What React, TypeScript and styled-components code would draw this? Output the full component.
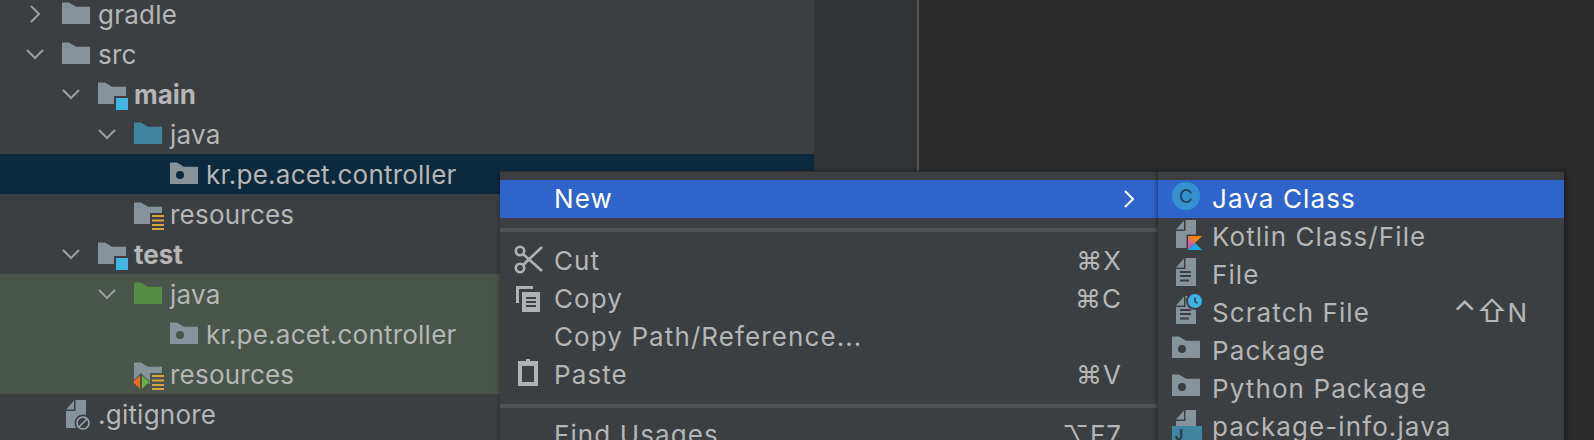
import React from "react";
import styled, { createGlobalStyle } from "styled-components";

const GlobalStyle = createGlobalStyle`
  html, body {
    margin: 0;
    padding: 0;
    background: #2b2b2b;
  }
`;

const GREY = "#87939a";
const CYAN = "#40b6e0";
const AMBER = "#d9a343";
const PANEL = "#3c3f41";

const Ide = styled.div`
  position: relative;
  display: flex;
  width: 1594px;
  height: 440px;
  overflow: hidden;
  background: #2b2b2b;
  font-family: Inter, "Liberation Sans", sans-serif;
  font-size: 26px;
  color: #b6b6b6;
`;

const TreePanel = styled.div`
  width: 814px;
  flex: none;
  background: ${PANEL};
`;

const TreeList = styled.div`
  margin-top: -6px;
  display: flex;
  flex-direction: column;
`;

const TreeRow = styled.div<{ $depth: number; $tone?: "selected" | "test" }>`
  display: flex;
  align-items: center;
  height: 40px;
  padding-left: ${({ $depth }) => 17 + $depth * 36}px;
  background: ${({ $tone }) =>
    $tone === "selected" ? "#0d293e" : $tone === "test" ? "#49544a" : "transparent"};
`;

const Twisty = styled.span`
  width: 36px;
  margin-right: 9px;
  flex: none;
  display: flex;
  justify-content: center;
`;

const RowLabel = styled.span<{ $bold?: boolean }>`
  margin-left: 8px;
  font-weight: ${({ $bold }) => ($bold ? 700 : 400)};
  letter-spacing: ${({ $bold }) => ($bold ? 0 : 0.22)}px;
  white-space: nowrap;
`;

const Gutter = styled.div`
  width: 103px;
  flex: none;
  background: #313335;
  border-right: 2px solid #555555;
`;

const EditorArea = styled.div`
  flex: 1;
  background: #2b2b2b;
`;

const Popup = styled.div`
  position: absolute;
  top: 172px;
  height: 300px;
  padding-top: 8px;
  box-sizing: border-box;
  background: ${PANEL};
  box-shadow: 0 -1px 0 #2a2c2d, 0 0 6px rgba(0, 0, 0, 0.35);
`;

const MainMenu = styled(Popup)`
  left: 500px;
  width: 658px;
`;

const SubMenu = styled(Popup)`
  left: 1158px;
  width: 406px;
  box-shadow: 0 -1px 0 #2a2c2d, -1px 0 5px rgba(0, 0, 0, 0.4), 2px 0 5px rgba(0, 0, 0, 0.25);
`;

const MenuItem = styled.div<{ $active?: boolean }>`
  display: flex;
  align-items: center;
  height: 38px;
  background: ${({ $active }) => ($active ? "#2f65ca" : "transparent")};
  color: ${({ $active }) => ($active ? "#ffffff" : "inherit")};
`;

const IconSlot = styled.span`
  width: 55px;
  height: 38px;
  flex: none;
  display: flex;
  justify-content: center;
  align-items: center;
  padding-bottom: 6px;
  box-sizing: border-box;
`;

const ItemLabel = styled.span`
  flex: 1;
  margin-left: -1px;
  padding-bottom: 2px;
  letter-spacing: 1.1px;
  white-space: nowrap;
`;

const Shortcut = styled.span`
  margin-right: 36px;
  padding-bottom: 2px;
  letter-spacing: 1px;
  white-space: nowrap;
  font-family: Inter, "DejaVu Sans", sans-serif;
`;

const KeySymbols = styled.span`
  font-size: 30px;
  line-height: 26px;
  letter-spacing: 0;
`;

const ArrowCell = styled.span`
  display: flex;
  margin-right: 23px;
`;

const Separator = styled.div<{ $top: number; $bottom: number }>`
  height: 4px;
  background: #515151;
  margin: ${({ $top, $bottom }) => `${$top}px 0 ${$bottom}px`};
`;

const Glyph = styled.svg`
  display: block;
  flex: none;
  overflow: visible;
`;

const FOLDER = "M0 2.5H7L14 6.8H28V24H0Z";

const Box = ({ children }: { children: React.ReactNode }) => (
  <Glyph width="28" height="28" viewBox="0 0 28 28">
    {children}
  </Glyph>
);

const ChevronRight = () => (
  <Glyph width="12" height="18" viewBox="0 0 12 18">
    <path d="M2 1l8 8-8 8" fill="none" stroke="#9c9ea0" strokeWidth="2" />
  </Glyph>
);

const ChevronDown = () => (
  <Glyph width="18" height="12" viewBox="0 0 18 12">
    <path d="M1 2l8 8 8-8" fill="none" stroke="#9c9ea0" strokeWidth="2" />
  </Glyph>
);

const Folder = ({ color = GREY }: { color?: string }) => (
  <Box>
    <path d={FOLDER} fill={color} />
  </Box>
);

const ModuleFolder = () => (
  <Box>
    <path d="M0 2.5H7L14 6.8H28V16H16V24H0Z" fill={GREY} />
    <rect x="18" y="18" width="12" height="12" fill={CYAN} />
  </Box>
);

const Stripes = () => (
  <g fill={AMBER}>
    <rect x="18" y="15" width="12" height="2" />
    <rect x="18" y="19.5" width="12" height="2" />
    <rect x="18" y="24" width="12" height="2" />
    <rect x="18" y="28" width="12" height="2" />
  </g>
);

const ResourceFolder = () => (
  <Box>
    <path d="M0 2.5H7L14 6.8H28V13H16V24H0Z" fill={GREY} />
    <Stripes />
  </Box>
);

const TestResourceFolder = () => (
  <Box>
    <path d="M0 2.5H7L14 6.8H28V13H16V24H0Z" fill={GREY} />
    <polygon points="-2,22 7,13 16,22 7,31" fill="#49544a" />
    <polygon points="-1,22 6,15.5 6,29" fill="#f26522" />
    <polygon points="8,15.5 15,22 8,29" fill="#62b543" />
    <Stripes />
  </Box>
);

const PackageFolder = ({ dot }: { dot: string }) => (
  <Box>
    <path d={FOLDER} fill={GREY} />
    <circle cx="10" cy="15" r="4" fill={dot} />
  </Box>
);

const FileShape = ({ lines }: { lines?: boolean }) => (
  <g>
    <path d="M13.5 0H24V28H4V11H13.5Z" fill={GREY} />
    <path d="M12 0.5V9.5H4Z" fill={GREY} />
    {lines && (
      <g fill="#3c3f41">
        <rect x="8" y="13" width="11" height="2" />
        <rect x="8" y="17" width="11" height="2" />
        <rect x="8" y="21.5" width="9" height="2" />
      </g>
    )}
  </g>
);

const IgnoredFile = () => (
  <Box>
    <FileShape />
    <circle cx="21" cy="23" r="8.5" fill={PANEL} />
    <circle cx="21" cy="23" r="6" fill="none" stroke="#9aa7b0" strokeWidth="1.6" />
    <path d="M17 27l8-8" stroke="#9aa7b0" strokeWidth="1.6" />
  </Box>
);

const JavaClassIcon = () => (
  <Box>
    <circle cx="14" cy="14" r="14" fill="#3592d0" />
    <text x="14" y="20.5" textAnchor="middle" fontSize="19" fontWeight="500" fill="#1f4a68" fontFamily="Inter, sans-serif">
      C
    </text>
  </Box>
);

const KotlinIcon = () => (
  <Box>
    <defs>
      <linearGradient id="kotlinBand" x1="1" y1="0" x2="0" y2="1">
        <stop offset="0.35" stopColor="#f88909" />
        <stop offset="0.75" stopColor="#c757bc" />
      </linearGradient>
    </defs>
    <FileShape />
    <rect x="14.5" y="14.5" width="17" height="17" fill={PANEL} />
    <polygon points="16,16 30,16 16,30" fill="url(#kotlinBand)" />
    <polygon points="23,23 30,30 16,30" fill="#18a9e8" />
  </Box>
);

const ScratchIcon = () => (
  <Box>
    <FileShape lines />
    <circle cx="23" cy="5" r="9" fill={PANEL} />
    <circle cx="23" cy="5" r="7" fill="#3db3e3" />
    <path d="M23 1.5V5.5L25.5 7.5" fill="none" stroke="#2b4a5a" strokeWidth="1.6" />
  </Box>
);

const JavaFileIcon = () => (
  <Box>
    <FileShape />
    <rect x="0" y="16" width="30" height="20" fill="#3e86a0" />
    <text x="3" y="30" fontSize="14" fontWeight="700" fill="#2a3a42" fontFamily="Inter, sans-serif">
      J
    </text>
  </Box>
);

const CutIcon = () => (
  <Box>
    <g fill="none" stroke="#afb1b3" strokeWidth="2.6">
      <circle cx="6" cy="7" r="4.2" />
      <circle cx="6" cy="24" r="4.2" />
      <path d="M9 10L28 27M9 21L28 3" />
    </g>
  </Box>
);

const CopyIcon = () => (
  <Box>
    <path d="M2 4H19V7H5V21H2Z" fill="#afb1b3" />
    <path d="M8 10H26V30H8Z" fill="#afb1b3" />
    <g fill={PANEL}>
      <rect x="12" y="15" width="10" height="2" />
      <rect x="12" y="19" width="10" height="2" />
      <rect x="12" y="23" width="10" height="2" />
    </g>
  </Box>
);

const PasteIcon = () => (
  <Box>
    <path d="M9 3H12V1H16V3H24V28H4V3Z" fill="#afb1b3" />
    <rect x="8" y="8" width="12" height="16" fill={PANEL} />
  </Box>
);

const MenuChevron = () => (
  <Glyph width="12" height="20" viewBox="0 0 12 20">
    <path d="M2 2l8 8-8 8" fill="none" stroke="#ffffff" strokeWidth="2" />
  </Glyph>
);

export default function App() {
  return (
    <Ide>
      <GlobalStyle />
      <TreePanel>
        <TreeList>
          <TreeRow $depth={0}>
            <Twisty><ChevronRight /></Twisty>
            <Folder />
            <RowLabel>gradle</RowLabel>
          </TreeRow>
          <TreeRow $depth={0}>
            <Twisty><ChevronDown /></Twisty>
            <Folder />
            <RowLabel>src</RowLabel>
          </TreeRow>
          <TreeRow $depth={1}>
            <Twisty><ChevronDown /></Twisty>
            <ModuleFolder />
            <RowLabel $bold>main</RowLabel>
          </TreeRow>
          <TreeRow $depth={2}>
            <Twisty><ChevronDown /></Twisty>
            <Folder color="#3e86a0" />
            <RowLabel>java</RowLabel>
          </TreeRow>
          <TreeRow $depth={3} $tone="selected">
            <Twisty />
            <PackageFolder dot="#0d293e" />
            <RowLabel>kr.pe.acet.controller</RowLabel>
          </TreeRow>
          <TreeRow $depth={2}>
            <Twisty />
            <ResourceFolder />
            <RowLabel>resources</RowLabel>
          </TreeRow>
          <TreeRow $depth={1}>
            <Twisty><ChevronDown /></Twisty>
            <ModuleFolder />
            <RowLabel $bold>test</RowLabel>
          </TreeRow>
          <TreeRow $depth={2} $tone="test">
            <Twisty><ChevronDown /></Twisty>
            <Folder color="#548c43" />
            <RowLabel>java</RowLabel>
          </TreeRow>
          <TreeRow $depth={3} $tone="test">
            <Twisty />
            <PackageFolder dot="#49544a" />
            <RowLabel>kr.pe.acet.controller</RowLabel>
          </TreeRow>
          <TreeRow $depth={2} $tone="test">
            <Twisty />
            <TestResourceFolder />
            <RowLabel>resources</RowLabel>
          </TreeRow>
          <TreeRow $depth={0}>
            <Twisty />
            <IgnoredFile />
            <RowLabel>.gitignore</RowLabel>
          </TreeRow>
        </TreeList>
      </TreePanel>
      <Gutter />
      <EditorArea />

      <MainMenu>
        <MenuItem $active>
          <IconSlot />
          <ItemLabel>New</ItemLabel>
          <ArrowCell><MenuChevron /></ArrowCell>
        </MenuItem>
        <Separator $top={10} $bottom={10} />
        <MenuItem>
          <IconSlot><CutIcon /></IconSlot>
          <ItemLabel>Cut</ItemLabel>
          <Shortcut>⌘X</Shortcut>
        </MenuItem>
        <MenuItem>
          <IconSlot><CopyIcon /></IconSlot>
          <ItemLabel>Copy</ItemLabel>
          <Shortcut>⌘C</Shortcut>
        </MenuItem>
        <MenuItem>
          <IconSlot />
          <ItemLabel>Copy Path/Reference...</ItemLabel>
        </MenuItem>
        <MenuItem>
          <IconSlot><PasteIcon /></IconSlot>
          <ItemLabel>Paste</ItemLabel>
          <Shortcut>⌘V</Shortcut>
        </MenuItem>
        <Separator $top={10} $bottom={8} />
        <MenuItem>
          <IconSlot />
          <ItemLabel>Find Usages</ItemLabel>
          <Shortcut>⌥F7</Shortcut>
        </MenuItem>
      </MainMenu>

      <SubMenu>
        <MenuItem $active>
          <IconSlot><JavaClassIcon /></IconSlot>
          <ItemLabel>Java Class</ItemLabel>
        </MenuItem>
        <MenuItem>
          <IconSlot><KotlinIcon /></IconSlot>
          <ItemLabel>Kotlin Class/File</ItemLabel>
        </MenuItem>
        <MenuItem>
          <IconSlot><Box><FileShape lines /></Box></IconSlot>
          <ItemLabel>File</ItemLabel>
        </MenuItem>
        <MenuItem>
          <IconSlot><ScratchIcon /></IconSlot>
          <ItemLabel>Scratch File</ItemLabel>
          <Shortcut><KeySymbols>⌃⇧</KeySymbols>N</Shortcut>
        </MenuItem>
        <MenuItem>
          <IconSlot><PackageFolder dot={PANEL} /></IconSlot>
          <ItemLabel>Package</ItemLabel>
        </MenuItem>
        <MenuItem>
          <IconSlot><PackageFolder dot={PANEL} /></IconSlot>
          <ItemLabel>Python Package</ItemLabel>
        </MenuItem>
        <MenuItem>
          <IconSlot><JavaFileIcon /></IconSlot>
          <ItemLabel>package-info.java</ItemLabel>
        </MenuItem>
      </SubMenu>
    </Ide>
  );
}
